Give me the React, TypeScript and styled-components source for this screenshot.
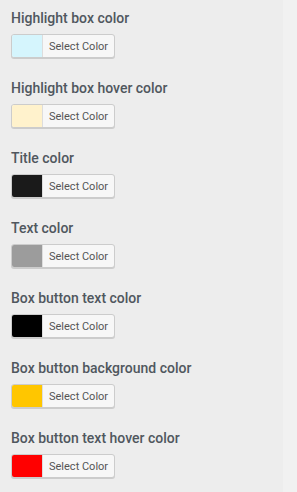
import styled, { createGlobalStyle } from "styled-components";

const GlobalStyle = createGlobalStyle`
    body {
        margin: 0;
        background: #f1f1f1;
        font-family: Roboto, "Liberation Sans", sans-serif;
    }
`;

const Panel = styled.div`
    width: 283px;
    min-height: 492px;
    background: #ededed;
    padding: 8px 0 0 11px;
    box-sizing: border-box;
    display: flex;
    flex-direction: column;
    gap: 20px;
`;

const Field = styled.div`
    display: flex;
    flex-direction: column;
    gap: 6px;
`;

const Label = styled.div`
    font-size: 14px;
    line-height: 20px;
    font-weight: 500;
    color: #50575e;
`;

const Picker = styled.button`
    display: flex;
    align-items: stretch;
    box-sizing: border-box;
    width: 104px;
    height: 24px;
    padding: 0;
    border: 1px solid #cccccc;
    border-radius: 3px;
    background: #f7f7f7;
    box-shadow: 0 1px 0 #cccccc;
    overflow: hidden;
    cursor: pointer;
`;

const Swatch = styled.span<{ $color: string }>`
    width: 30px;
    background: ${(props) => props.$color};
    border-right: 1px solid #dddddd;
`;

const PickerText = styled.span`
    flex: 1;
    display: flex;
    align-items: center;
    padding-left: 6px;
    font-family: Roboto, "Liberation Sans", sans-serif;
    font-size: 11px;
    color: #555555;
`;

const fields = [
    { label: "Highlight box color", color: "#d5f5fd" },
    { label: "Highlight box hover color", color: "#fff2cc" },
    { label: "Title color", color: "#1a1a1a" },
    { label: "Text color", color: "#9c9c9c" },
    { label: "Box button text color", color: "#000000" },
    { label: "Box button background color", color: "#ffc600" },
    { label: "Box button text hover color", color: "#ff0000" },
];

function App() {
    return (
        <>
            <GlobalStyle />
            <Panel>
                {fields.map((field) => (
                    <Field key={field.label}>
                        <Label>{field.label}</Label>
                        <Picker>
                            <Swatch $color={field.color} />
                            <PickerText>Select Color</PickerText>
                        </Picker>
                    </Field>
                ))}
            </Panel>
        </>
    );
}

export default App;
